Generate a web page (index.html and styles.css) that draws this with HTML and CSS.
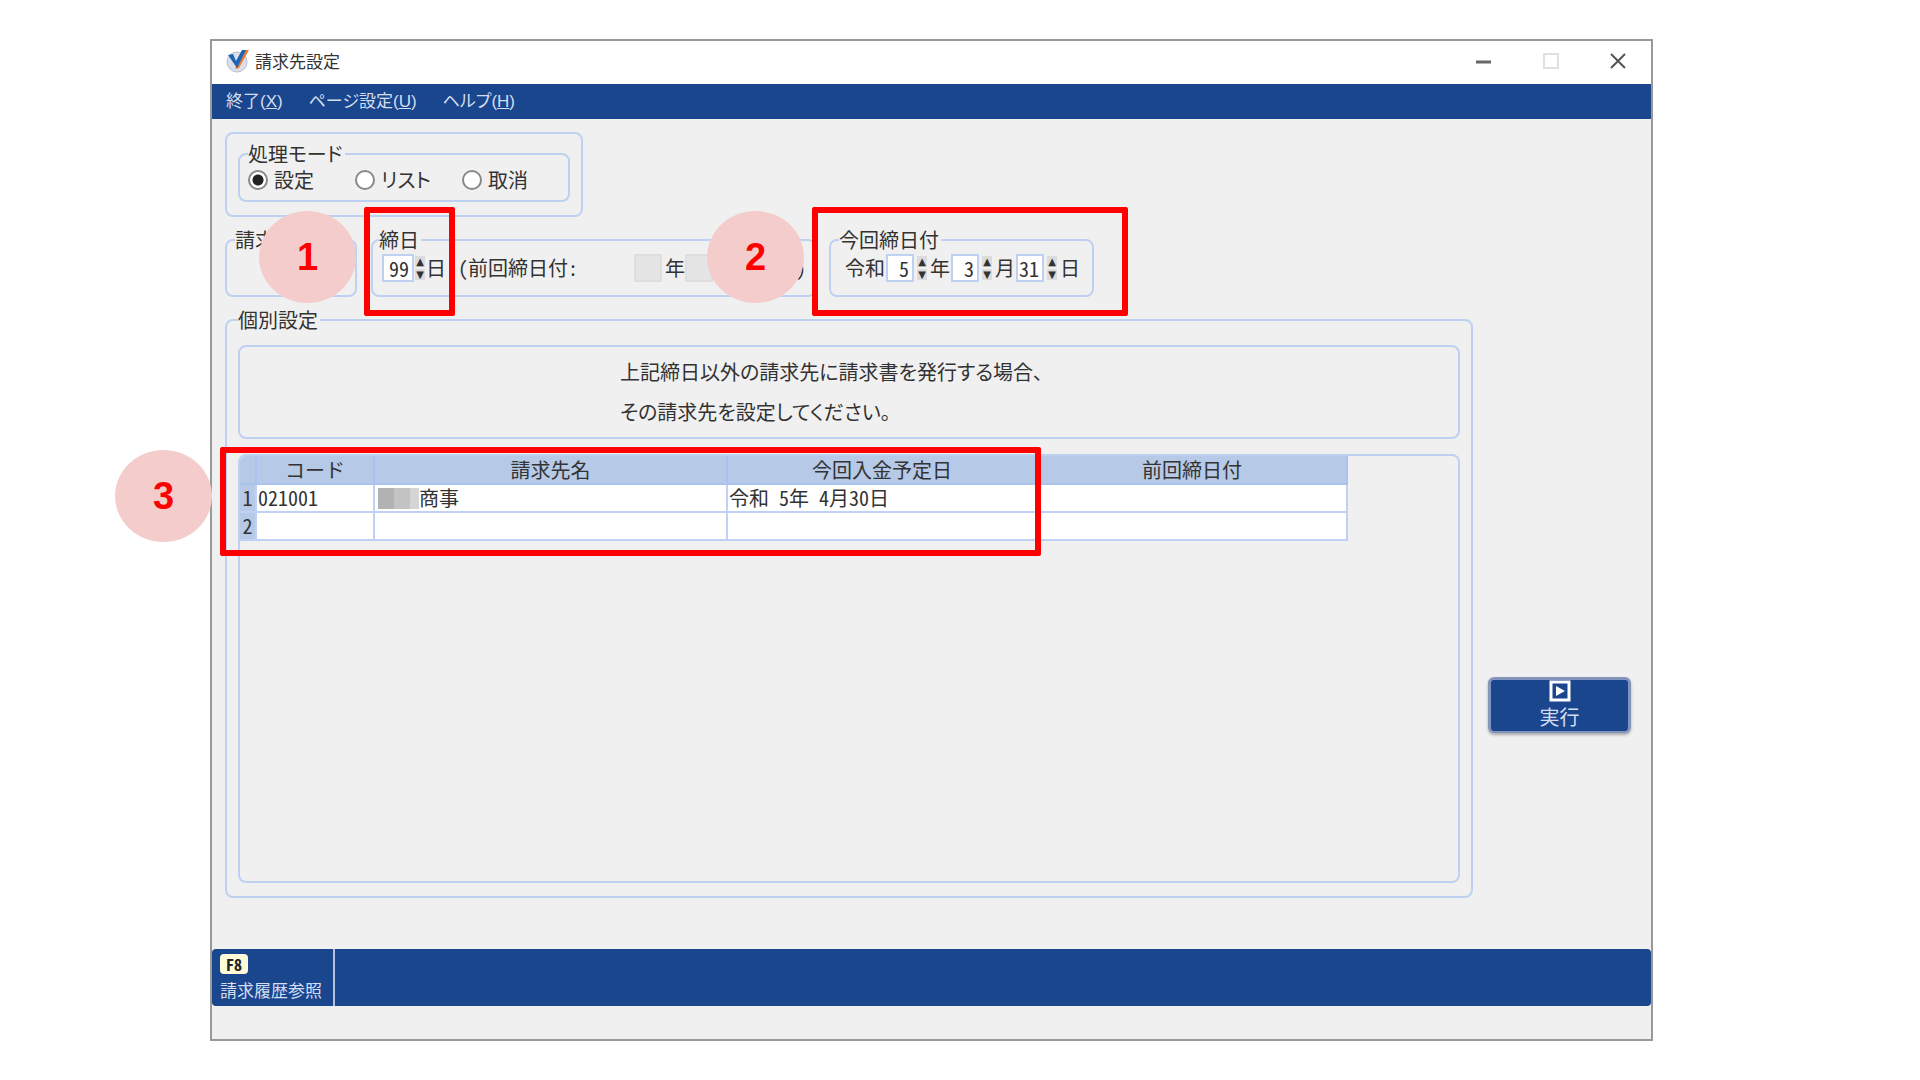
FILE: index.html
```html
<!DOCTYPE html>
<html lang="ja">
<head>
    <meta charset="UTF-8">
    <meta name="viewport" content="width=device-width, initial-scale=1.0">
    <title>請求先設定</title>
    <link rel="stylesheet" href="styles.css">
</head>
<body>
    <div class="window">
        <!-- タイトルバー -->
        <header class="titlebar">
            <svg class="logo" viewBox="0 0 24 24">
                <circle cx="12" cy="13" r="10" fill="#dcdfe9" stroke="#b9bed0"/>
                <path d="M19 1h5L14 19l-4 1z" fill="#ee7b30"/>
                <path d="M3 6l5-1 3 7 6-11h4L12 19z" fill="#1b66b4"/>
            </svg>
            <h1>請求先設定</h1>
            <div class="window-buttons">
                <button aria-label="最小化"><svg viewBox="0 0 16 16"><path d="M0 9h15" stroke="#666" stroke-width="3"/></svg></button>
                <button aria-label="最大化" disabled><svg viewBox="0 0 16 16"><path d="M1 1h14v14H1z" fill="none" stroke="#e0e0e0" stroke-width="2"/></svg></button>
                <button aria-label="閉じる"><svg viewBox="0 0 16 16"><path d="M1 1l14 14M15 1L1 15" stroke="#555" stroke-width="2"/></svg></button>
            </div>
        </header>

        <!-- メニュー -->
        <nav class="menu">
            <a href="#">終了(<u>X</u>)</a>
            <a href="#">ページ設定(<u>U</u>)</a>
            <a href="#">ヘルプ(<u>H</u>)</a>
        </nav>

        <main>
            <div class="panel mode">
                <fieldset>
                    <legend>処理モード</legend>
                    <div class="radios">
                        <label><input type="radio" name="mode" checked>設定</label>
                        <label><input type="radio" name="mode">リスト</label>
                        <label><input type="radio" name="mode">取消</label>
                    </div>
                </fieldset>
            </div>

            <div class="conditions">
                <fieldset class="billing">
                    <legend>請求</legend>
                </fieldset>
                <fieldset class="closing">
                    <legend>締日</legend>
                    <div class="fields">
                        <input class="wide" type="text" value="99" aria-label="締日">
                        <span class="spin"><button aria-label="締日を増やす">▲</button><button aria-label="締日を減らす">▼</button></span>
                        <span>日</span>
                        <span class="previous">(前回締日付:</span>
                        <input type="text" aria-label="前回締日付の年" disabled>
                        <span>年</span>
                        <input type="text" aria-label="前回締日付の月" disabled>
                        <span class="close">)</span>
                    </div>
                </fieldset>
                <fieldset class="current">
                    <legend>今回締日付</legend>
                    <div class="fields">
                        <span>令和</span>
                        <input type="text" value="5" aria-label="年">
                        <span class="spin"><button aria-label="年を増やす">▲</button><button aria-label="年を減らす">▼</button></span>
                        <span>年</span>
                        <input type="text" value="3" aria-label="月">
                        <span class="spin"><button aria-label="月を増やす">▲</button><button aria-label="月を減らす">▼</button></span>
                        <span>月</span>
                        <input type="text" value="31" aria-label="日">
                        <span class="spin"><button aria-label="日を増やす">▲</button><button aria-label="日を減らす">▼</button></span>
                        <span>日</span>
                    </div>
                </fieldset>
            </div>

            <div class="work">
                <fieldset class="individual">
                    <legend>個別設定</legend>
                    <div class="panel message">
                        <p>上記締日以外の請求先に請求書を発行する場合、</p>
                        <p>その請求先を設定してください。</p>
                    </div>
                    <div class="panel list">
                        <table>
                            <colgroup>
                                <col class="col-no">
                                <col class="col-code">
                                <col class="col-name">
                                <col class="col-date">
                                <col class="col-date">
                            </colgroup>
                            <thead>
                                <tr><th></th><th>コード</th><th>請求先名</th><th>今回入金予定日</th><th>前回締日付</th></tr>
                            </thead>
                            <tbody>
                                <tr><th>1</th><td>021001</td><td><span class="mosaic"></span>商事</td><td>令和 5年 4月30日</td><td></td></tr>
                                <tr><th>2</th><td></td><td></td><td></td><td></td></tr>
                            </tbody>
                        </table>
                    </div>
                </fieldset>
                <div class="side">
                    <button class="run">
                        <svg viewBox="0 0 22 22"><path d="M2 2h18v18H2z" fill="none" stroke="#fff" stroke-width="3"/><path d="M7 6l9 5-9 5z" fill="#fff"/></svg>
                        <span>実行</span>
                    </button>
                </div>
            </div>
        </main>

        <!-- ファンクションキー -->
        <div class="function-keys">
            <button><kbd>F8</kbd>請求履歴参照</button>
        </div>
        <div class="statusbar"></div>

        <!-- 手順の番号と枠 -->
        <div class="frame frame-1"></div>
        <div class="frame frame-2"></div>
        <div class="frame frame-3"></div>
        <div class="step step-1">1</div>
        <div class="step step-2">2</div>
        <div class="step step-3">3</div>
    </div>
</body>
</html>
```
FILE: styles.css
```css
* {
    box-sizing: border-box;
}
body {
    margin: 0;
    padding: 39px 267px 40px 210px;
    background: #fff;
    color: #333;
    font-family: "Noto Sans CJK JP", sans-serif;
    font-size: 20px;
    line-height: 24px;
    font-feature-settings: "hwid";
}
button, input {
    font: inherit;
    font-feature-settings: inherit;
    color: inherit;
    margin: 0;
    padding: 0;
    border: none;
}
.window {
    position: relative;
    display: flex;
    flex-direction: column;
    min-height: calc(100vh - 79px);
    background: #f0f0f0;
    border: 2px solid #999;
}

/* タイトルバー */
.titlebar {
    display: flex;
    align-items: center;
    height: 43px;
    padding: 0 25px 4px 13px;
    background: #fff;
}
.logo {
    width: 24px;
    height: 24px;
    margin-right: 6px;
}
h1 {
    margin: 0;
    font-size: 17px;
    font-weight: normal;
}
.window-buttons {
    display: flex;
    gap: 51px;
    margin-left: auto;
}
.window-buttons button {
    width: 16px;
    height: 16px;
    background: none;
}
.window-buttons svg {
    display: block;
}

/* メニュー */
.menu {
    display: flex;
    gap: 26px;
    height: 35px;
    padding: 6px 14px;
    background: #1a468e;
    font-family: "Liberation Sans", "Noto Sans CJK JP", sans-serif;
    font-size: 17px;
    font-feature-settings: "palt";
}
.menu a {
    color: #d4def0;
    text-decoration: none;
}

/* 枠 */
main {
    flex: 1;
    display: flex;
    flex-direction: column;
    gap: 11px;
    padding: 13px 20px 51px 13px;
}
.panel, fieldset {
    border: 2px solid #bfd1f0;
    border-radius: 8px;
}
fieldset {
    min-width: 0;
    margin: 0;
    padding: 2px 8px 13px;
}
legend {
    padding: 0 2px 0 0;
}
.mode {
    width: 358px;
    padding: 8px 11px 13px;
}
.mode fieldset {
    padding-bottom: 8px;
}
.mode legend {
    font-feature-settings: "palt";
}
.radios {
    display: flex;
    font-feature-settings: "palt";
}
.radios label {
    display: flex;
    align-items: center;
    width: 107px;
}
.radios label:last-child {
    width: auto;
}
.radios input {
    appearance: none;
    width: 20px;
    height: 20px;
    margin-right: 6px;
    background: #fff;
    border: 2px solid #888;
    border-radius: 50%;
}
.radios input:checked {
    background: radial-gradient(circle, #222 5px, #fff 6px);
}

/* 締日 */
.conditions {
    display: flex;
}
.billing {
    width: 132px;
    margin-right: 14px;
}
.closing {
    width: 445px;
    margin-right: 13px;
    padding-left: 6px;
}
.current {
    width: 265px;
}
.fields {
    display: flex;
    align-items: center;
    height: 28px;
    white-space: nowrap;
}
.current .fields {
    padding-left: 6px;
}
.fields input {
    width: 28px;
    height: 28px;
    padding-right: 3px;
    background: #fff;
    border: 2px solid #bfd1f0;
    text-align: right;
}
.current input {
    margin-left: 1px;
}
.fields .wide {
    width: 32px;
    margin-left: 3px;
}
.fields input:disabled {
    background: #e5e5e5;
    border-color: #dedede;
}
.spin {
    display: flex;
    flex-direction: column;
    gap: 2px;
    width: 10px;
    margin: 0 3px;
}
.closing .spin {
    margin: 0 1px;
}
.spin button {
    height: 11px;
    background: #dcdcdc;
    font-family: "DejaVu Sans", sans-serif;
    font-size: 10px;
    line-height: 11px;
}
.previous {
    width: 188px;
    padding-left: 12px;
}
.closing input:disabled {
    margin-right: 3px;
}
.close {
    margin-left: 80px;
}

/* 個別設定 */
.work {
    flex: 1;
    display: flex;
    gap: 15px;
}
.individual {
    flex: 1;
    display: flex;
    flex-direction: column;
    height: 590px;
    padding: 13px 11px;
}
.message {
    padding: 5px 0 5px 380px;
    margin-bottom: 15px;
    font-feature-settings: "palt";
}
.message p {
    margin: 0;
    line-height: 40px;
}
.list {
    flex: 1;
    overflow: hidden;
}
table {
    table-layout: fixed;
    width: 1108px;
    border-collapse: collapse;
}
.col-no {
    width: 16px;
}
.col-code {
    width: 118px;
}
.col-name {
    width: 353px;
}
th, td {
    height: 28px;
    padding: 0;
    border: 2px solid #bfd1f5;
    font-weight: normal;
    line-height: 24px;
}
tr > :first-child {
    border-left: none;
}
thead th {
    border-top: none;
}
th {
    background: #b6c9e6;
}
thead th {
    border-color: #aac3ec;
}
td {
    padding-left: 1px;
    background: #fff;
    white-space: nowrap;
}
.mosaic {
    display: inline-block;
    width: 41px;
    height: 21px;
    margin-left: 2px;
    background: linear-gradient(to right, #b2b2b2 16px, #c3c3c3 16px, #c3c3c3 32px, #d5d5d5 32px);
    vertical-align: -3px;
}

/* 実行 */
.side {
    width: 143px;
    padding-top: 369px;
}
.run {
    display: flex;
    flex-direction: column;
    align-items: center;
    width: 100%;
    height: 56px;
    background: #1a468e;
    border: 3px solid #8495bd;
    border-bottom-width: 2px;
    border-radius: 6px;
    box-shadow: 0 2px 3px #aaa;
    color: #d4def0;
}
.run svg {
    flex: none;
    width: 22px;
    height: 22px;
}
.run span {
    line-height: 30px;
}

/* ファンクションキー */
.function-keys {
    height: 57px;
    background: #1a468e;
    border-radius: 4px;
}
.function-keys button {
    display: flex;
    flex-direction: column;
    align-items: flex-start;
    width: 123px;
    height: 57px;
    padding: 5px 0 0 8px;
    background: none;
    border-right: 2px solid #b4c2dc;
    color: #d4def0;
    font-size: 17px;
    line-height: 32px;
}
kbd {
    width: 28px;
    background: #fffbd8;
    border-radius: 4px;
    color: #222;
    font-family: inherit;
    font-size: 16px;
    font-weight: bold;
    line-height: 20px;
    text-align: center;
}
.statusbar {
    height: 33px;
}

/* 手順 */
.frame {
    position: absolute;
    border: 6px solid #f00;
    border-radius: 2px;
}
.frame-1 {
    left: 152px;
    top: 166px;
    width: 91px;
    height: 109px;
}
.frame-2 {
    left: 600px;
    top: 166px;
    width: 316px;
    height: 109px;
}
.frame-3 {
    left: 8px;
    top: 406px;
    width: 821px;
    height: 109px;
}
.step {
    position: absolute;
    width: 97px;
    height: 92px;
    background: #f4cccc;
    border-radius: 50%;
    color: #f00;
    font-family: "Liberation Sans", sans-serif;
    font-size: 38px;
    font-weight: bold;
    line-height: 92px;
    text-align: center;
}
.step-1 {
    left: 47px;
    top: 170px;
}
.step-2 {
    left: 495px;
    top: 170px;
}
.step-3 {
    left: -97px;
    top: 409px;
}
```
